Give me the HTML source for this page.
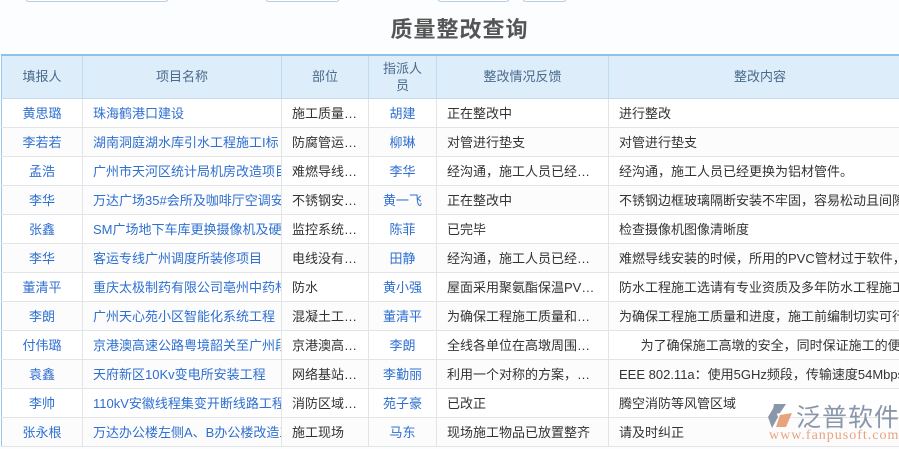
<!DOCTYPE html>
<html><head><meta charset="utf-8"><style>
*{margin:0;padding:0;box-sizing:border-box}
body{width:899px;height:449px;overflow:hidden;background:#fcfdfe;font-family:"Liberation Sans","Noto Sans CJK SC",sans-serif;font-size:13px;color:#333;position:relative}
.inp{position:absolute;top:-6px;height:8px;border:1px solid #b9cde3;border-radius:4px;background:#fff}
h1{position:absolute;top:12px;left:0;width:919px;text-align:center;font-size:22px;font-weight:bold;color:#555;letter-spacing:1px}
table{position:absolute;top:54px;left:1px;border-collapse:collapse;table-layout:fixed;width:910px;border-top:2px solid #8fc0e8;border-left:1px solid #9cc6ea}
th{background:#ddedfa;color:#4a6a8a;font-weight:normal;height:43px;border-right:1px solid #c2dbef;border-bottom:1px solid #c2dbef;line-height:17px}
td{height:29px;border-right:1px solid #e2e4e6;border-bottom:1px solid #e2e4e6;white-space:nowrap;overflow:hidden;text-overflow:clip;padding:0 10px;background:#fff}
tr:nth-child(odd) td{background:#fcfcfc}
td.c{text-align:center;color:#2e6fd0;padding:0}
td.l{color:#2e6fd0}
td.e{text-overflow:ellipsis}
.logo{position:absolute;left:766px;top:401px}
</style></head><body>
<div class="inp" style="left:25px;width:144px"></div>
<div class="inp" style="left:265px;width:75px"></div>
<div class="inp" style="left:437px;width:73px"></div>
<div class="inp" style="left:522px;width:45px"></div>
<h1>质量整改查询</h1>
<table>
<colgroup><col style="width:81px"><col style="width:199px"><col style="width:87px"><col style="width:68px"><col style="width:172px"><col style="width:303px"></colgroup>
<tr><th>填报人</th><th>项目名称</th><th>部位</th><th>指派人<br>员</th><th>整改情况反馈</th><th>整改内容</th></tr>
<tr><td class="c">黄思璐</td><td class="l">珠海鹤港口建设</td><td class="e">施工质量问题</td><td class="c">胡建</td><td class="e">正在整改中</td><td>进行整改</td></tr>
<tr><td class="c">李若若</td><td class="l">湖南洞庭湖水库引水工程施工I标</td><td class="e">防腐管运输问题</td><td class="c">柳琳</td><td class="e">对管进行垫支</td><td>对管进行垫支</td></tr>
<tr><td class="c">孟浩</td><td class="l">广州市天河区统计局机房改造项目</td><td class="e">难燃导线问题</td><td class="c">李华</td><td class="e">经沟通，施工人员已经更换</td><td>经沟通，施工人员已经更换为铝材管件。</td></tr>
<tr><td class="c">李华</td><td class="l">万达广场35#会所及咖啡厅空调安装</td><td class="e">不锈钢安装问题</td><td class="c">黄一飞</td><td class="e">正在整改中</td><td>不锈钢边框玻璃隔断安装不牢固，容易松动且间隙</td></tr>
<tr><td class="c">张鑫</td><td class="l">SM广场地下车库更换摄像机及硬盘</td><td class="e">监控系统问题</td><td class="c">陈菲</td><td class="e">已完毕</td><td>检查摄像机图像清晰度</td></tr>
<tr><td class="c">李华</td><td class="l">客运专线广州调度所装修项目</td><td class="e">电线没有套管</td><td class="c">田静</td><td class="e">经沟通，施工人员已经更换</td><td>难燃导线安装的时候，所用的PVC管材过于软件，</td></tr>
<tr><td class="c">董清平</td><td class="l">重庆太极制药有限公司亳州中药材</td><td class="e">防水</td><td class="c">黄小强</td><td class="e">屋面采用聚氨酯保温PVC防水</td><td>防水工程施工选请有专业资质及多年防水工程施工</td></tr>
<tr><td class="c">李朗</td><td class="l">广州天心苑小区智能化系统工程</td><td class="e">混凝土工程问题</td><td class="c">董清平</td><td class="e">为确保工程施工质量和进度</td><td>为确保工程施工质量和进度，施工前编制切实可行</td></tr>
<tr><td class="c">付伟璐</td><td class="l">京港澳高速公路粤境韶关至广州段</td><td class="e">京港澳高速公路</td><td class="c">李朗</td><td class="e">全线各单位在高墩周围设置</td><td>&nbsp;&nbsp;&nbsp;&nbsp;&nbsp;&nbsp;为了确保施工高墩的安全，同时保证施工的便</td></tr>
<tr><td class="c">袁鑫</td><td class="l">天府新区10Kv变电所安装工程</td><td class="e">网络基站问题</td><td class="c">李勤丽</td><td class="e">利用一个对称的方案，进行</td><td>EEE 802.11a：使用5GHz频段，传输速度54Mbps</td></tr>
<tr><td class="c">李帅</td><td class="l">110kV安徽线程集变开断线路工程</td><td class="e">消防区域问题</td><td class="c">苑子豪</td><td class="e">已改正</td><td>腾空消防等风管区域</td></tr>
<tr><td class="c">张永根</td><td class="l">万达办公楼左侧A、B办公楼改造工程</td><td class="e">施工现场</td><td class="c">马东</td><td class="e">现场施工物品已放置整齐</td><td>请及时纠正</td></tr>
</table>
<div class="logo">
<svg width="30" height="30" viewBox="0 0 30 30" style="position:absolute;left:0;top:0"><path d="M8 3 L20 3 L14 12 L6 14 Z" fill="#8a97ab"/><path d="M2 16 L8 6 L12 16 L6 27 Z" fill="#8a97ab"/><path d="M14 14 L26 12 L20 26 L10 26 Z" fill="#e8a27e"/></svg>
<div style="position:absolute;left:30px;top:-3px;font-size:25px;color:#8a97ab;white-space:nowrap;letter-spacing:1px">泛普软件</div>
<div style="position:absolute;left:3px;top:27px;font-family:'Liberation Serif',serif;font-size:14px;color:#e8a27e;white-space:nowrap;letter-spacing:1px">www.fanpusoft.com</div>
</div>
</body></html>
